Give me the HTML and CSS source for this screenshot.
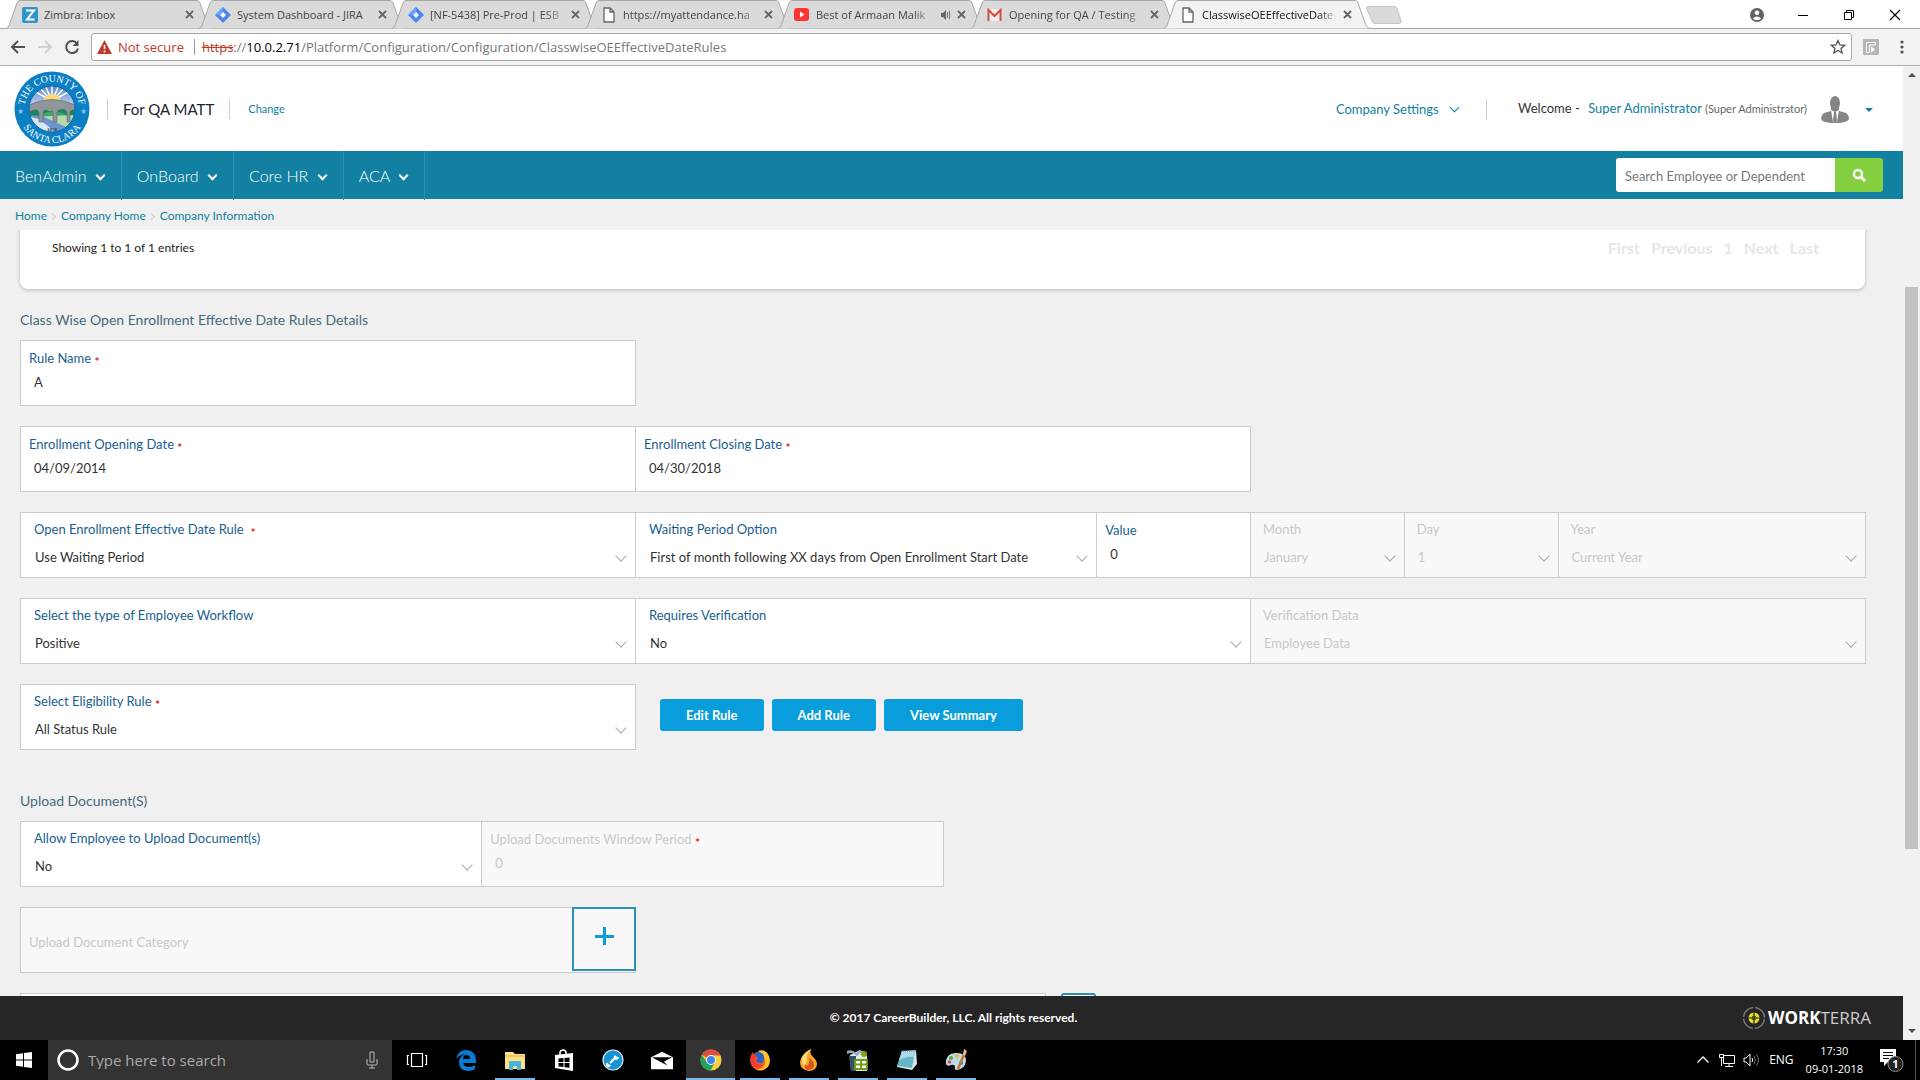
FILE: index.html
```
<!DOCTYPE html>
<html lang="en">
<head>
	<meta charset="UTF-8">
	<title>ClasswiseOEEffectiveDateRules</title>
	<link rel="stylesheet" href="styles.css">
</head>
<body>
	<!-- shared shapes -->
	<svg class="defs" aria-hidden="true">
		<symbol id="tab-shape" viewBox="0 0 206 29"><path d="M0 28.500 Q2 28 3 25.500 L11 3 Q12 .5 14 .5 H191 Q193 .5 194 3 L202 25.500 Q203 28 206 28.500"/></symbol>
		<symbol id="close" viewBox="0 0 9 9"><path d="M1 1l7 7M8 1L1 8" stroke="#666" stroke-width="1.8"/></symbol>
		<symbol id="page" viewBox="0 0 16 16"><path d="M3 1h6l4 4v10H3zM9 1v4h4" fill="#fff" stroke="#666" stroke-width="1.300"/></symbol>
		<symbol id="jira" viewBox="0 0 16 16"><path d="M8 0l8 8-8 8-8-8z" fill="#4a86f0"/><path d="M8 5l3 3-3 3-3-3z" fill="#fff"/><path d="M8 0v5L5 8H0z" fill="#6aa2fa"/></symbol>
	</svg>

	<div id="tabs">
		<div class="tab">
			<svg class="shape"><use href="#tab-shape"/></svg>
			<svg class="fav" viewBox="0 0 16 16"><rect width="16" height="16" rx="2" fill="#2f96c8"/><path d="M4 3.500h8L5 12.500h7.500" fill="none" stroke="#fff" stroke-width="2"/></svg>
			<span class="title">Zimbra: Inbox</span>
			<svg class="close"><use href="#close"/></svg>
		</div>
		<div class="tab">
			<svg class="shape"><use href="#tab-shape"/></svg>
			<svg class="fav"><use href="#jira"/></svg>
			<span class="title">System Dashboard - JIRA</span>
			<svg class="close"><use href="#close"/></svg>
		</div>
		<div class="tab">
			<svg class="shape"><use href="#tab-shape"/></svg>
			<svg class="fav"><use href="#jira"/></svg>
			<span class="title fade">[NF-5438] Pre-Prod | ESB</span>
			<svg class="close"><use href="#close"/></svg>
		</div>
		<div class="tab">
			<svg class="shape"><use href="#tab-shape"/></svg>
			<svg class="fav"><use href="#page"/></svg>
			<span class="title fade">https://myattendance.ha</span>
			<svg class="close"><use href="#close"/></svg>
		</div>
		<div class="tab">
			<svg class="shape"><use href="#tab-shape"/></svg>
			<svg class="fav" viewBox="0 0 16 16"><rect y="1" width="15" height="13" rx="3" fill="#f33"/><path d="M6 4.500l4.500 3L6 10.500z" fill="#fff"/></svg>
			<span class="title fade">Best of Armaan Malik</span>
			<svg class="audio" viewBox="0 0 10 10"><path d="M0 3h2l3-3v10L2 7H0z" fill="#666"/><path d="M6.500 2v6M8.500 1v8" stroke="#777"/></svg>
			<svg class="close"><use href="#close"/></svg>
		</div>
		<div class="tab">
			<svg class="shape"><use href="#tab-shape"/></svg>
			<svg class="fav" viewBox="0 0 16 16"><rect x="1" y="2" width="13" height="12" fill="#eee"/><path d="M1.500 14V3L7.500 9l6-6v11" fill="none" stroke="#d8493c" stroke-width="2"/></svg>
			<span class="title fade">Opening for QA / Testing</span>
			<svg class="close"><use href="#close"/></svg>
		</div>
		<div class="tab active">
			<svg class="shape"><use href="#tab-shape"/></svg>
			<svg class="fav"><use href="#page"/></svg>
			<span class="title fade">ClasswiseOEEffectiveDate</span>
			<svg class="close"><use href="#close"/></svg>
		</div>
		<svg class="newtab" viewBox="0 0 36 18"><path d="M2 .5h26q2 0 3 2l4 12q1 3-2 3H9q-2 0-3-2L1 3Q0 .5 2 .5z" fill="#dadada" stroke="#c4c4c4"/></svg>
		<div class="winbtns">
			<svg viewBox="0 0 14 14"><circle cx="7" cy="7" r="7" fill="#5f6368"/><circle cx="7" cy="4.800" r="2.300" fill="#fff"/><path d="M2.800 10.500q4.200-4 8.400 0q-4.200 3.500-8.400 0z" fill="#fff"/></svg>
			<svg viewBox="0 0 14 14"><path d="M2 7.500h10" stroke="#000"/></svg>
			<svg viewBox="0 0 14 14"><path d="M2.500 4.500h7v7h-7zM4.500 4V2.500h7v7H10" fill="none" stroke="#000"/></svg>
			<svg viewBox="0 0 14 14"><path d="M2 2l10 10M12 2L2 12" stroke="#000" stroke-width="1.200"/></svg>
		</div>
	</div>

	<div id="toolbar">
		<svg class="tool" viewBox="0 0 16 16"><path d="M15 8H2M8 2L2 8l6 6" fill="none" stroke="#505050" stroke-width="2"/></svg>
		<svg class="tool" viewBox="0 0 16 16"><path d="M1 8h13M8 2l6 6-6 6" fill="none" stroke="#d0d0d0" stroke-width="2"/></svg>
		<svg class="tool" viewBox="0 0 16 16"><path d="M13 4.500A6 6 0 1 0 14 9.500" fill="none" stroke="#505050" stroke-width="2"/><path d="M14.500 1v6h-6z" fill="#505050"/></svg>
		<div class="address">
			<svg class="warn" viewBox="0 0 15 14"><path d="M7.500 0L15 14H0z" fill="#c0392b"/><path d="M7.500 5v4M7.500 10.500v2" stroke="#fff" stroke-width="1.600"/></svg>
			<span class="notsecure">Not secure</span>
			<span class="url"><s>https</s>://<b>10.0.2.71</b>/Platform/Configuration/Configuration/ClasswiseOEEffectiveDateRules</span>
			<svg class="star" viewBox="0 0 16 16"><path d="M8 1.500l1.900 4.400 4.700.4-3.600 3.100 1.100 4.600L8 11.500 3.900 14 5 9.400 1.400 6.300l4.700-.4z" fill="none" stroke="#505050" stroke-width="1.300"/></svg>
		</div>
		<svg class="ext" viewBox="0 0 16 16"><rect width="16" height="16" rx="1" fill="#b5b5b5"/><path d="M3.500 13.500v-10h9v2.500H6.500v7.500z" fill="none" stroke="#fff"/><path d="M8 7l4 3.500L8 14z" fill="#fff"/></svg>
		<svg class="dots" viewBox="0 0 4 14"><circle cx="2" cy="2" r="1.600"/><circle cx="2" cy="7" r="1.600"/><circle cx="2" cy="12" r="1.600"/></svg>
	</div>

	<div id="window">
		<div id="app">
			<header id="header">
				<svg class="logo" viewBox="0 0 76 76">
					<defs>
						<path id="arc-top" d="M10.500 38a27.500 27.500 0 0 1 55 0"/>
						<path id="arc-bottom" d="M4 38a34 34 0 0 0 68 0"/>
						<clipPath id="seal"><circle cx="38" cy="38" r="23"/></clipPath>
						<linearGradient id="sky" x1="0" y1="0" x2="0" y2="1"><stop offset="0" stop-color="#5b87c9"/><stop offset="1" stop-color="#dfe9f5"/></linearGradient>
					</defs>
					<circle cx="38" cy="38" r="37.500" fill="#0a7fc4"/>
					<g clip-path="url(#seal)">
						<rect x="15" y="15" width="46" height="25" fill="url(#sky)"/>
						<path d="M38 30L20 20M38 30L25 16M38 30L31 14M38 30V13M38 30l7-16M38 30l13-14M38 30l18-10" stroke="#fff" stroke-width="1.500"/>
						<circle cx="38" cy="32" r="9" fill="#fbd878"/>
						<path d="M14 36q8-6 14 2l10 2 10-2q6-8 14-2v26H14z" fill="#18895a"/>
						<path d="M27 43q12-5 24 0v4H27z" fill="#3fa774"/>
						<path d="M15 46l46-2v18H15z" fill="#b6dcae"/>
						<path d="M15 44l13 1 33 15v4H48z" fill="#6f93d0"/>
						<path d="M15 46l10 2 20 16H15z" fill="#d8e5f4"/>
						<path d="M15 34q23-11 46 0v5q-4-1-5 2v10h-3V42q-1-4-5-4t-5 4v9h-4v-9q-1-4-5-4t-5 4v9h-4V42q-1-4-5-3l-5 2z" fill="#8f969c" stroke="#5d666b" stroke-width=".6"/>
					</g>
					<circle cx="38" cy="38" r="23" fill="none" stroke="#0867a5"/>
					<text class="seal-text"><textPath href="#arc-top" startOffset="50%" text-anchor="middle">THE COUNTY OF</textPath></text>
					<text class="seal-text"><textPath href="#arc-bottom" startOffset="50%" text-anchor="middle">SANTA CLARA</textPath></text>
					<text class="seal-star" x="3" y="43">★</text>
					<text class="seal-star" x="66" y="43">★</text>
					<text class="seal-year" x="38" y="60" text-anchor="middle">1850</text>
				</svg>
				<span class="company">For QA MATT</span>
				<a class="change" href="#">Change</a>
				<a class="settings" href="#">Company Settings <i class="chev"></i></a>
				<div class="welcome">
					<span>Welcome -</span>
					<a href="#">Super Administrator</a>
					<small>(Super Administrator)</small>
				</div>
				<svg class="avatar" viewBox="0 0 28 27"><ellipse cx="14" cy="7" rx="5" ry="7" fill="#848587"/><path d="M10 11h8v4l7 2q3 2 3 5 0 5-14 5T0 22q0-3 3-5l7-2z" fill="#848587"/><path d="M10 14l4 2 4-2-2 12h-4z" fill="#fff"/><path d="M13 16h2l1 9-2 2-2-2z" fill="#848587"/></svg>
				<i class="caret"></i>
			</header>

			<nav id="nav">
				<ul>
					<li><a href="#">BenAdmin <i class="chev"></i></a></li>
					<li><a href="#">OnBoard <i class="chev"></i></a></li>
					<li><a href="#">Core HR <i class="chev"></i></a></li>
					<li><a href="#">ACA <i class="chev"></i></a></li>
				</ul>
				<form class="search">
					<input type="text" aria-label="Search" placeholder="Search Employee or Dependent">
					<button type="button" aria-label="Search"><svg viewBox="0 0 14 14"><circle cx="6" cy="6" r="4" fill="none" stroke="#fff" stroke-width="2.400"/><path d="M9 9l4 4" stroke="#fff" stroke-width="2.800"/></svg></button>
				</form>
			</nav>

			<div id="crumbs">
				<a href="#">Home</a><i></i><a href="#">Company Home</a><i></i><a href="#">Company Information</a>
			</div>

			<main id="content">
				<div class="panel">
					<span>Showing 1 to 1 of 1 entries</span>
					<div class="pages"><span>First</span><span>Previous</span><span>1</span><span>Next</span><span>Last</span></div>
				</div>

				<h2>Class Wise Open Enrollment Effective Date Rules Details</h2>
				<div class="row">
					<div class="field w4">
						<label for="rule-name">Rule Name <em>*</em></label>
						<input id="rule-name" type="text" value="A">
					</div>
				</div>
				<div class="row">
					<div class="field w4">
						<label for="open-date">Enrollment Opening Date <em>*</em></label>
						<input id="open-date" type="text" value="04/09/2014">
					</div>
					<div class="field w4">
						<label for="close-date">Enrollment Closing Date <em>*</em></label>
						<input id="close-date" type="text" value="04/30/2018">
					</div>
				</div>
				<div class="row">
					<div class="field select w4">
						<label for="date-rule">Open Enrollment Effective Date Rule &nbsp;<em>*</em></label>
						<select id="date-rule"><option>Use Waiting Period</option></select>
					</div>
					<div class="field select w3">
						<label for="waiting">Waiting Period Option</label>
						<select id="waiting"><option>First of month following XX days from Open Enrollment Start Date</option></select>
					</div>
					<div class="field w1">
						<label for="value">Value</label>
						<input id="value" type="text" value="0">
					</div>
					<div class="field select off w1">
						<label for="month">Month</label>
						<select id="month" disabled><option>January</option></select>
					</div>
					<div class="field select off w1">
						<label for="day">Day</label>
						<select id="day" disabled><option>1</option></select>
					</div>
					<div class="field select off w2">
						<label for="year">Year</label>
						<select id="year" disabled><option>Current Year</option></select>
					</div>
				</div>
				<div class="row">
					<div class="field select w4">
						<label for="workflow">Select the type of Employee Workflow</label>
						<select id="workflow"><option>Positive</option></select>
					</div>
					<div class="field select w4">
						<label for="verify">Requires Verification</label>
						<select id="verify"><option>No</option></select>
					</div>
					<div class="field select off w4">
						<label for="verify-data">Verification Data</label>
						<select id="verify-data" disabled><option>Employee Data</option></select>
					</div>
				</div>
				<div class="row">
					<div class="field select w4">
						<label for="eligibility">Select Eligibility Rule <em>*</em></label>
						<select id="eligibility"><option>All Status Rule</option></select>
					</div>
					<div class="buttons">
						<button type="button">Edit Rule</button>
						<button type="button">Add Rule</button>
						<button type="button">View Summary</button>
					</div>
				</div>

				<h2 class="upload">Upload Document(S)</h2>
				<div class="row">
					<div class="field select w3">
						<label for="allow">Allow Employee to Upload Document(s)</label>
						<select id="allow"><option>No</option></select>
					</div>
					<div class="field off w3">
						<label for="window-period">Upload Documents Window Period <em>*</em></label>
						<input id="window-period" type="text" value="0" disabled>
					</div>
				</div>
				<div class="row">
					<div class="field off category w4">
						<span>Upload Document Category</span>
						<button type="button" aria-label="Add category"></button>
					</div>
				</div>
				<div class="row last">
					<div class="field"></div>
					<button type="button" aria-label="Add document"></button>
				</div>
			</main>

			<footer id="footer">
				<span></span>
				<p>© 2017 CareerBuilder, LLC. All rights reserved.</p>
				<div class="brand">
					<svg viewBox="0 0 24 24"><circle cx="12" cy="12" r="10.500" fill="none" stroke="#777" stroke-width="1.500" stroke-dasharray="14.500 2" stroke-dashoffset="-1"/><circle cx="12" cy="12" r="5.500" fill="#e6e02c"/><path d="M12 6v12M6 12h12" stroke="#262626" stroke-width="1.200"/><circle cx="12" cy="12" r="2" fill="none" stroke="#262626" stroke-width=".8"/></svg>
					<span><b>WORK</b>TERRA</span>
				</div>
			</footer>
		</div>
		<div id="scroll">
			<i class="up"></i>
			<div class="track"><div class="thumb"></div></div>
			<i class="down"></i>
		</div>
	</div>

	<div id="taskbar">
		<div class="start"><svg viewBox="0 0 16 16"><path d="M0 2.200L7 1.200V7.500H0zM8 1.100L16 0v7.500H8zM0 8.500h7v6.300L0 13.800zM8 8.500h8V16l-8-1.100z" fill="#fff"/></svg></div>
		<div class="find">
			<svg class="cortana" viewBox="0 0 22 22"><circle cx="11" cy="11" r="9.500" fill="none" stroke="#fff" stroke-width="2.500"/></svg>
			<input type="text" aria-label="Type here to search" placeholder="Type here to search">
			<svg class="mic" viewBox="0 0 12 18"><path d="M4 1h4v10H4zM1 8v5q0 1 1 1h8q1 0 1-1V8M6 14v3M3 17h6" fill="none" stroke="#bbb"/></svg>
		</div>
		<div class="task"><svg viewBox="0 0 22 22"><path d="M5.500 4.500h11v13h-11zM3 6.500H1.500v9H3M19 6.500h1.500v9H19" fill="none" stroke="#fff" stroke-width="1.200"/></svg></div>
		<div class="task"><svg viewBox="0 0 22 22"><path d="M1 10Q3 1 11.500 1 21 1.500 21 12v2H8q1 4 6 4 3 0 6-2v4q-3 2-7 2-9-.5-9-9 0-5 6-8-6 1-9 5zM8 10h7q0-4-3.500-4T8 10z" fill="#0b7bd8"/></svg></div>
		<div class="task run"><svg viewBox="0 0 22 22"><path d="M1 3h8l2 2h10v15H1z" fill="#fce08a"/><path d="M1 6h20v2H1z" fill="#f3c95a"/><path d="M5 21v-8q0-1 1-1h10q1 0 1 1v8h-4v-4H9v4z" fill="#45b4dc"/></svg></div>
		<div class="task"><svg viewBox="0 0 22 22"><path d="M2 6l18-2v18L2 19z" fill="#fff"/><path d="M7 6V4q0-3 3-3t3 3v2" fill="none" stroke="#fff" stroke-width="1.500"/><path d="M5.500 9.500l5-.5v4h-5zM11.500 9l5-.5V13h-5zM5.500 14h5v4l-5-.5zM11.500 14h5v4.800l-5-.6z" fill="#000"/></svg></div>
		<div class="task"><svg viewBox="0 0 22 22"><circle cx="11" cy="11" r="10" fill="#1592d4" stroke="#dff2fb" stroke-width="1.200"/><path d="M8 14l6-6" stroke="#fff" stroke-width="2.200"/><path d="M5 13.500a2.600 2.600 0 1 0 4 2.500l-2-.5zM17 8.500a2.600 2.600 0 1 1-4-2.500l1.500 1.500z" fill="#fff"/></svg></div>
		<div class="task"><svg viewBox="0 0 24 22"><path d="M0 8l12-6 12 6v13H0z" fill="#fff"/><path d="M1 8h22l-9 5 4 4-8-4z" fill="#000"/></svg></div>
		<div class="task run on"><svg viewBox="0 0 22 22"><circle cx="11" cy="11" r="10.500" fill="#fbd03c"/><path d="M11 11L1.700 6A10.500 10.500 0 0 1 20.500 6.500H11z" fill="#d9503f"/><path d="M1.700 6A10.500 10.500 0 0 0 10.500 21.500L15 13.500 7 13z" fill="#23a05b"/><circle cx="11" cy="11" r="5" fill="#fff"/><circle cx="11" cy="11" r="4" fill="#4284ee"/></svg></div>
		<div class="task run"><svg viewBox="0 0 22 22"><circle cx="11" cy="12" r="9.500" fill="#fb5a22"/><path d="M9 2q7-3 11 5 3 9-4 13-4 2-8 1 9-2 8-9-1-6-7-10z" fill="#ffc528"/><path d="M5 5q5-4 9 0 3 6-1 9-5 1-6-3l2-2z" fill="#2a62c4"/><path d="M1 13Q1 6 4 3q0 3 4 5l-2 3q1 6 8 4-4 5-9 3z" fill="#f23a2d"/></svg></div>
		<div class="task run"><svg viewBox="0 0 22 22"><path d="M13 0q-2 4 2 8 7 6 2 12-3 2-6 2-9-1-9-9Q3 5 13 0z" fill="#f9a928"/><path d="M14 0Q7 5 9 11l-2 7q-5-5-2-11 3-5 9-7z" fill="#ffdc79"/><path d="M11 9q6 4 5 8-1 4-6 4-5-1-3-6l2 2q3-3 2-8z" fill="#d8541b"/></svg></div>
		<div class="task run"><svg viewBox="0 0 22 22"><path d="M3 6l10-5 7 6v15H4z" fill="#dce8ee"/><path d="M2 7h7v15H4z" fill="#33516a"/><path d="M0 2q5-2 9 2 5-4 9-1-5 0-8 4Q6 2 0 5z" fill="#94aabb"/><circle cx="17" cy="5" r="3" fill="#7fa51b"/><path d="M8 11h12v9H8zM14 11v9M8 15.500h12" fill="#fff" stroke="#6f9b12" stroke-width="1.800"/></svg></div>
		<div class="task run"><svg viewBox="0 0 22 22"><path d="M6 2l14-1 1 14-5 6-15-3z" fill="#d7e4e8"/><path d="M6 2l13 0-3 17-15-2z" fill="#65b4c8"/><path d="M6 2l13 0-1 6Q9 7 3 12z" fill="#a6dce6"/><path d="M5 2h15" stroke="#667" stroke-dasharray="1 1"/></svg></div>
		<div class="task run"><svg viewBox="0 0 22 22"><path d="M1 15Q0 5 10 4q11-1 11 8-1 8-9 9-3 0-2-3 0-3-4-2-4 2-5-1z" fill="#bcdcec"/><circle cx="6" cy="9" r="2" fill="#5aa943"/><circle cx="12" cy="7" r="2" fill="#f0bd32"/><circle cx="4.500" cy="13" r="1.800" fill="#d85043"/><circle cx="16" cy="14" r="2" fill="#356bb5"/><path d="M20 3L13 20" stroke="#c7772c" stroke-width="2.500"/><path d="M18 6l1-6 3 2-2 5z" fill="#e9bd8b"/></svg></div>
		<div class="tray">
			<svg viewBox="0 0 16 16"><path d="M2.500 10.500L8 5l5.500 5.500" fill="none" stroke="#fff" stroke-width="1.300"/></svg>
			<svg viewBox="0 0 16 16"><path d="M4.500 3.500h11v8h-11zM10 12v2M6 14.500h8M.5 2.500h4v3h-4zM2.500 6v8" fill="none" stroke="#fff"/></svg>
			<svg viewBox="0 0 16 16"><path d="M1 6h2l4-4v12l-4-4H1z" fill="none" stroke="#fff"/><path d="M9 6q1.500 2 0 4" fill="none" stroke="#fff"/><path d="M11 4q3 4 0 8M13.500 2.500q4 5.500 0 11" fill="none" stroke="#777"/></svg>
			<span class="lang">ENG</span>
			<span class="clock">17:30<br>09-01-2018</span>
			<svg class="note" viewBox="0 0 25 25"><path d="M1 1h16v13H9l-4 4v-4H1z" fill="#fff"/><path d="M4 4.500h10M4 7.500h10M4 10.500h6" stroke="#000"/><circle cx="16.500" cy="16" r="7.500" fill="#222" stroke="#888"/><text x="16.500" y="20" text-anchor="middle">1</text></svg>
		</div>
	</div>
</body>
</html>
```
FILE: styles.css
```
*{
	box-sizing: border-box;
	margin: 0;
	padding: 0;
}
body{
	display: flex;
	flex-direction: column;
	height: 100vh;
	overflow: hidden;
	font: 14px/20px Lato, "Open Sans", sans-serif;
	color: #333;
	background: #f0f0f0;
}
a{
	color: #1280a0;
	text-decoration: none;
}
ul{
	list-style: none;
}
svg{
	display: block;
	flex: none;
}
button, input, select{
	font: inherit;
	border: 0;
	outline: 0;
}
.defs{
	position: absolute;
	width: 0;
	height: 0;
}

/* browser */
#tabs, #toolbar{
	display: flex;
	align-items: center;
	flex: none;
	font: 11px/16px "Open Sans", sans-serif;
}
#tabs{
	height: 29px;
	padding-left: 6px;
	background: linear-gradient(#a8a8a8, #a8a8a8) bottom / 100% 1px no-repeat #fff;
}
.tab{
	position: relative;
	display: flex;
	align-items: center;
	flex: none;
	width: 206px;
	height: 29px;
	margin-right: -13px;
	padding: 0 18px 0 16px;
	color: #444;
}
.tab .shape{
	position: absolute;
	left: 0;
	top: 0;
	width: 206px;
	height: 29px;
	fill: #dadada;
	stroke: #a8a8a8;
}
.tab.active{
	color: #111;
	z-index: 1;
}
.tab.active .shape{
	fill: #f2f2f2;
}
.tab .fav{
	position: relative;
	width: 16px;
	height: 16px;
	margin-right: 6px;
}
.tab .title{
	position: relative;
	flex: 1;
	white-space: nowrap;
	overflow: hidden;
}
.tab .fade{
	mask-image: linear-gradient(to right, #000 85%, transparent);
}
.tab .close{
	position: relative;
	width: 9px;
	height: 9px;
	margin-left: 4px;
}
.tab .audio{
	position: relative;
	width: 10px;
	height: 10px;
	margin-left: 8px;
}
.tab .audio + .close{
	margin-left: 6px;
}
.newtab{
	width: 36px;
	height: 18px;
	margin-left: 9px;
}
.winbtns{
	display: flex;
	gap: 32px;
	margin-left: auto;
	padding-right: 18px;
}
.winbtns svg{
	width: 14px;
	height: 14px;
}
#toolbar{
	height: 37px;
	padding: 0 16px 0 10px;
	gap: 11px;
	background: #f2f2f2;
	border-bottom: 1px solid #b0b0b0;
}
.tool{
	width: 16px;
	height: 16px;
}
.address{
	display: flex;
	align-items: center;
	flex: 1;
	height: 28px;
	padding: 0 5px;
	background: #fff;
	border: 1px solid #a8a8a8;
	border-radius: 3px;
	font-size: 13px;
}
.warn{
	width: 15px;
	height: 14px;
	margin-right: 6px;
}
.notsecure{
	padding-right: 10px;
	margin-right: 7px;
	border-right: 1px solid #999;
	color: #c0392b;
}
.url{
	flex: 1;
	color: #777;
}
.url s{
	color: #c0392b;
}
.url b{
	font-weight: 400;
	color: #000;
}
.star, .ext{
	width: 16px;
	height: 16px;
}
.dots{
	width: 4px;
	height: 14px;
	margin-left: 10px;
	fill: #505050;
}

/* page */
#window{
	display: flex;
	flex: 1;
	min-height: 0;
}
#app{
	display: flex;
	flex-direction: column;
	flex: 1;
	min-width: 0;
}
#header{
	display: flex;
	align-items: center;
	flex: none;
	height: 85px;
	padding: 0 30px 0 14px;
	background: #fff;
	font-size: 13px;
}
.logo{
	width: 76px;
	height: 76px;
}
.seal-text{
	font: 10px "Liberation Serif", serif;
	fill: #fff;
}
.seal-star{
	font: 8px "DejaVu Sans", sans-serif;
	fill: #7cc4ee;
}
.seal-year{
	font: bold 5px "Liberation Serif", serif;
	fill: #234;
}
.company{
	margin-left: 17px;
	padding: 0 15px;
	border: solid #ccc;
	border-width: 0 1px;
	font-size: 15px;
	color: #223;
}
.change{
	padding-left: 18px;
	font-size: 11px;
}
.settings{
	margin-left: auto;
	padding-right: 27px;
	border-right: 1px solid #ccc;
}
.chev{
	display: inline-block;
	width: 7px;
	height: 7px;
	margin: 0 1px 3px 9px;
	border: solid;
	border-width: 0 1px 1px 0;
	transform: rotate(45deg);
}
.welcome{
	padding-left: 31px;
}
.welcome a{
	margin-left: 5px;
}
.welcome small{
	font-size: 11px;
	color: #666;
}
.avatar{
	width: 28px;
	height: 27px;
	margin: 2px 16px 0 14px;
}
.caret{
	margin-top: 3px;
	border: 4px solid transparent;
	border-top-color: #1280a0;
	border-bottom: 0;
}
#nav{
	display: flex;
	align-items: center;
	justify-content: space-between;
	flex: none;
	height: 48px;
	padding-right: 20px;
	background: #1280a0;
}
#nav ul{
	display: flex;
}
#nav li{
	padding: 1px 15px 0;
	line-height: 47px;
	border-right: 1px solid #2b8fae;
}
#nav a{
	font-size: 16px;
	font-weight: 300;
	color: #fff;
}
#nav .chev{
	margin: 0 2px 3px 6px;
	border-width: 0 2px 2px 0;
}
.search{
	display: flex;
	height: 34px;
	border-radius: 3px;
	overflow: hidden;
}
.search input{
	width: 219px;
	padding: 2px 9px 0;
	background: #fff;
	font-size: 13px;
}
.search input::placeholder{
	color: #777;
}
.search button{
	width: 48px;
	background: #85d040;
}
.search svg{
	width: 14px;
	height: 14px;
	margin: 0 auto;
}
#crumbs{
	display: flex;
	align-items: center;
	flex: none;
	height: 31px;
	padding: 3px 15px 0;
	font-size: 12px;
}
#crumbs i{
	width: 5px;
	height: 5px;
	margin: 0 6px 0 3px;
	border: solid #ccc;
	border-width: 1px 1px 0 0;
	transform: rotate(45deg);
}
#content{
	flex: 1;
	min-height: 0;
	padding: 0 38px 0 20px;
	overflow: hidden;
}
.panel{
	display: flex;
	justify-content: space-between;
	height: 59px;
	padding: 8px 46px 0 32px;
	background: #fff;
	border-radius: 0 0 8px 8px;
	box-shadow: 0 1px 3px 1px #ccc;
	font-size: 12px;
	color: #222;
}
.pages{
	display: flex;
	gap: 11px;
	font-size: 16px;
	font-weight: 700;
	color: #e6e6e6;
}
#content h2{
	margin: 21px 0 10px;
	font-size: 14px;
	font-weight: 400;
	color: #456a7c;
}
#content h2.upload{
	margin-top: 41px;
}
.row{
	display: grid;
	grid-template-columns: repeat(12, 1fr);
	margin-bottom: 20px;
}
.field{
	position: relative;
	height: 66px;
	margin-right: -1px;
	padding: 7px 8px 0;
	background: #fff;
	border: 1px solid #ccc;
}
.w1{
	grid-column: span 1;
}
.w2{
	grid-column: span 2;
}
.w3{
	grid-column: span 3;
}
.w4{
	grid-column: span 4;
}
.field label{
	display: block;
	font-size: 13px;
	color: #1a6090;
}
.field em{
	font-size: 12px;
	font-style: normal;
	font-weight: 700;
	line-height: 1;
	vertical-align: -3px;
	color: #e02020;
}
.field input, .field select{
	display: block;
	width: 100%;
	height: 20px;
	margin-top: 4px;
	padding-left: 5px;
	font-size: 13px;
	color: #333;
	background: none;
	appearance: none;
}
.select{
	padding: 6px 13px 0;
}
.select select{
	margin-top: 8px;
	padding-left: 1px;
	opacity: 1;
}
.select::after{
	content: "";
	position: absolute;
	right: 10px;
	bottom: 17px;
	width: 7px;
	height: 7px;
	border: solid #aaa;
	border-width: 0 1px 1px 0;
	transform: rotate(45deg);
}
.off{
	background: #f8f8f8;
}
.off label, .off input, .off select, .off span{
	color: #c8c8c8;
}
.off.select{
	padding: 6px 12px 0;
}
.buttons{
	grid-column: span 8;
	display: flex;
	align-items: center;
	gap: 8px;
	padding: 0 0 4px 25px;
}
.buttons button{
	height: 32px;
	padding: 0 26px;
	background: #0a9ddb;
	border-radius: 3px;
	font-size: 13px;
	font-weight: 700;
	color: #fff;
}
.category{
	display: flex;
	justify-content: space-between;
	padding: 0 0 0 8px;
}
.category span{
	padding-top: 24px;
	font-size: 13px;
}
.category button{
	width: 64px;
	height: 64px;
	margin: -1px -1px 0 0;
	background: linear-gradient(#0a9ddb, #0a9ddb) 50% 26px / 19px 3px no-repeat, linear-gradient(#0a9ddb, #0a9ddb) 50% 18px / 3px 18px no-repeat, #f8f8f8;
	border: 2px solid #2a90b8;
}
.last{
	display: flex;
	gap: 16px;
}
.last .field{
	width: 56%;
}
.last button{
	width: 35px;
	height: 32px;
	border: 2px solid #2a90b8;
	border-radius: 3px;
	background: #fff;
}
.last .field{
	flex: 0 0 auto;
	width: 55.6%;
}
#footer{
	display: grid;
	grid-template-columns: 1fr auto 1fr;
	align-items: center;
	flex: none;
	height: 44px;
	padding: 0 32px 0 36px;
	background: #262626;
	font-size: 12px;
	font-weight: 700;
	color: #fff;
}
.brand{
	display: flex;
	align-items: center;
	justify-content: flex-end;
	gap: 2px;
	font: 17px/24px "Open Sans", sans-serif;
	color: #ccc;
}
.brand svg{
	width: 24px;
	height: 24px;
}
.brand b{
	color: #fff;
}
#scroll{
	display: flex;
	flex-direction: column;
	align-items: center;
	flex: none;
	width: 17px;
	padding: 7px 0;
	background: #f1f1f1;
}
#scroll .track{
	flex: 1;
	width: 13px;
	margin: 3px 0;
	padding-top: 207px;
}
#scroll .thumb{
	height: 76%;
	background: #c1c1c1;
}
#scroll i{
	border: 4px solid transparent;
}
#scroll .up{
	border-top: 0;
	border-bottom-color: #505050;
}
#scroll .down{
	border-bottom: 0;
	border-top-color: #505050;
}

/* taskbar */
#taskbar{
	display: flex;
	flex: none;
	height: 40px;
	background: #000;
	font: 12px/18px "Open Sans", sans-serif;
	color: #fff;
}
.start, .task{
	display: flex;
	align-items: center;
	justify-content: center;
	flex: none;
	width: 49px;
}
.start{
	width: 48px;
}
.start svg{
	width: 16px;
	height: 16px;
}
.find{
	display: flex;
	align-items: center;
	width: 344px;
	padding: 0 14px 0 9px;
	background: #333;
}
.find input{
	flex: 1;
	min-width: 0;
	padding-left: 9px;
	background: none;
	font-size: 15px;
}
.find input::placeholder{
	color: #aaa;
}
.cortana{
	width: 22px;
	height: 22px;
}
.mic{
	width: 12px;
	height: 18px;
}
.task svg{
	width: 22px;
	height: 22px;
}
.run{
	background: linear-gradient(#76b9ed, #76b9ed) bottom / 40px 2px no-repeat;
}
.run.on{
	background: linear-gradient(#76b9ed, #76b9ed) bottom / 49px 2px no-repeat #333;
}
.tray{
	display: flex;
	align-items: center;
	gap: 8px;
	margin: 0 4px 0 auto;
	padding-right: 11px;
	border-right: 1px solid #555;
}
.tray svg{
	width: 16px;
	height: 16px;
}
.lang{
	margin-left: 2px;
}
.clock{
	margin: 0 8px 0 4px;
	font-size: 11px;
	text-align: center;
}
.tray .note{
	width: 25px;
	height: 25px;
}
.note text{
	font: bold 11px "Open Sans", sans-serif;
	fill: #fff;
}
```
